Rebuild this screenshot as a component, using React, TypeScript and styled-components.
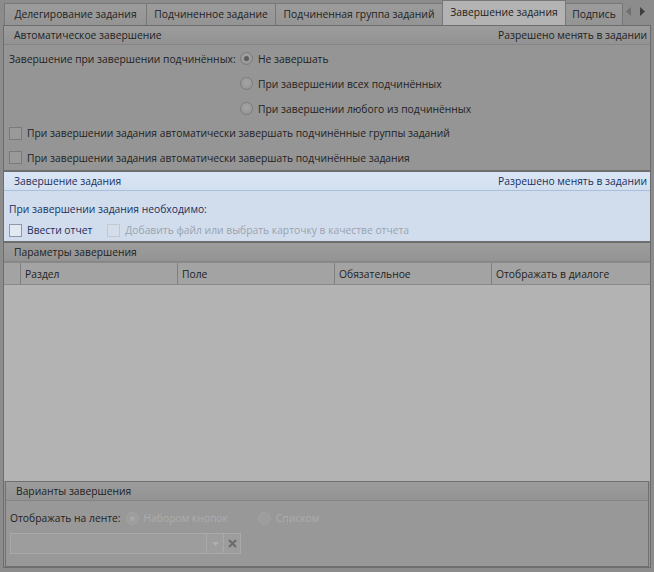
import React from "react";
import styled, { createGlobalStyle } from "styled-components";

const Global = createGlobalStyle`
  html, body { margin: 0; padding: 0; }
  body { width: 654px; height: 572px; overflow: hidden; background: #8c8c8c;
    font-family: "Open Sans", "Noto Sans", sans-serif; font-size: 10.3px; color: #222; }
  * { box-sizing: border-box; }
`;

const Page = styled.div`
  width: 654px; height: 572px; display: flex; flex-direction: column;
  background: #8c8c8c; padding: 0 3px 4px 3px;
`;

const TabStrip = styled.div`
  height: 25px; display: flex; align-items: flex-end; padding-left: 1px; position: relative;
`;

const Tab = styled.div<{ $active?: boolean; $w: number }>`
  width: ${p => p.$w}px; height: ${p => (p.$active ? 25 : 22)}px;
  display: flex; align-items: center; justify-content: center;
  border: 1px solid #777; border-bottom: none;
  background: ${p => (p.$active ? "#b3b3b3" : "linear-gradient(#9c9c9c, #949494)")};
  color: #222; white-space: nowrap; overflow: hidden; margin-right: -1px;
  padding-bottom: 2px;
`;

const Arrows = styled.div`
  position: absolute; right: 6px; top: 7px; display: flex; gap: 9px;
`;

const Frame = styled.div`
  flex: 1; border: 1px solid #6c6c6c; background: #959595;
  display: flex; flex-direction: column;
`;

const GroupHeader = styled.div<{ $blue?: boolean }>`
  height: 19px; display: flex; align-items: center; justify-content: space-between;
  padding: 0 3px 0 10px; flex-shrink: 0;
  background: ${p => (p.$blue ? "linear-gradient(#dae6f5, #d2dfef)" : "linear-gradient(#9c9c9c, #939393)")};
  border-bottom: 1px solid ${p => (p.$blue ? "#a9bfdc" : "#858585")};
  color: ${p => (p.$blue ? "#1b2f5e" : "#222")};
`;

const Section = styled.div`
  display: flex; flex-direction: column;
`;

const Body1 = styled.div`
  padding: 1px 5px 0 5px; display: flex; flex-direction: column; height: 127px;
  border-bottom: 2px solid #6e6e6e;
`;

const RadioGrid = styled.div`
  display: grid; grid-template-columns: 231px auto; align-items: center; white-space: nowrap;
`;

const Line = styled.div<{ $h: number }>`
  height: ${p => p.$h}px; display: flex; align-items: center; gap: 5px; white-space: nowrap;
`;

const RadioCircle = styled.span<{ $checked?: boolean; $disabled?: boolean }>`
  width: 13px; height: 13px; border-radius: 50%; flex-shrink: 0; position: relative;
  border: 1px solid ${p => (p.$disabled ? "#a3a3a3" : "#7c7c7c")};
  background: ${p => (p.$disabled ? "#9d9d9d" : "radial-gradient(circle at 50% 40%, #a4a4a4, #929292)")};
  &::after {
    content: ""; display: ${p => (p.$checked ? "block" : "none")};
    position: absolute; left: 3px; top: 3px; width: 5px; height: 5px; border-radius: 50%;
    background: ${p => (p.$disabled ? "#a8a8a8" : "#5d5d5d")};
  }
`;

const CheckBox = styled.span<{ $blue?: boolean; $disabled?: boolean }>`
  width: 13px; height: 13px; flex-shrink: 0;
  border: 1px solid ${p => (p.$disabled ? "#c0c8d4" : p.$blue ? "#8d99ab" : "#7a7a7a")};
  background: ${p => (p.$disabled ? "#d4dde9" : p.$blue ? "#e2e9f2" : "#9a9a9a")};
`;

const BlueSection = styled.div`
  background: #d1ddec; display: flex; flex-direction: column; color: #1b2f5e;
  border-bottom: 2px solid #6e6e6e;
`;

const BlueBody = styled.div`
  height: 50px; padding: 11px 5px 0 5px; display: flex; flex-direction: column; gap: 4px;
`;

const Muted = styled.span`
  color: #9aa3ae;
`;

const Spacer = styled.span<{ $w: number }>`
  width: ${p => p.$w}px; flex-shrink: 0;
`;

const GridHead = styled.div`
  display: grid; grid-template-columns: 16px 157px 157px 157px 1fr; height: 23px;
  background: #a3a3a3; border-bottom: 1px solid #8a8a8a; border-top: 1px solid #8a8a8a;
`;

const HeadCell = styled.div`
  display: flex; align-items: center; padding-left: 4px; border-left: 1px solid #7f7f7f;
  &:first-child { border-left: none; }
`;

const GridBody = styled.div`
  flex: 1; background: #b3b3b3;
`;

const Frame3 = styled.div`
  flex: 1; display: flex; flex-direction: column;
`;

const Variants = styled.div`
  margin: 0 1px 0 1px; border: 1px solid #707070; background: #989898;
  display: flex; flex-direction: column; height: 86px;
`;

const VariantsBody = styled.div`
  padding: 7px 4px; display: flex; flex-direction: column; gap: 5px; color: #222;
`;

const DisabledText = styled.span`
  color: #adadad;
`;

const Combo = styled.div`
  width: 231px; height: 21px; display: flex; border: 1px solid #a9a9a9; background: #9d9d9d;
`;

const ComboInput = styled.div`
  flex: 1;
`;

const ComboBtn = styled.div`
  width: 17px; display: flex; align-items: center; justify-content: center;
  border-left: 1px solid #a9a9a9;
`;

export default function App() {
  return (
    <>
      <Global />
      <Page>
        <TabStrip>
          <Tab $w={143}>Делегирование задания</Tab>
          <Tab $w={130}>Подчиненное задание</Tab>
          <Tab $w={168}>Подчиненная группа заданий</Tab>
          <Tab $w={124} $active>Завершение задания</Tab>
          <Tab $w={58}>Подпись</Tab>
          <Arrows>
            <svg width="5" height="9" viewBox="0 0 5 9"><path d="M5 0 L0 4.5 L5 9Z" fill="#6e6e6e" /></svg>
            <svg width="5" height="9" viewBox="0 0 5 9"><path d="M0 0 L5 4.5 L0 9Z" fill="#3e3e3e" /></svg>
          </Arrows>
        </TabStrip>
        <Frame>
          <Section>
            <GroupHeader>
              <span>Автоматическое завершение</span>
              <span>Разрешено менять в задании</span>
            </GroupHeader>
            <Body1>
              <RadioGrid>
                <span>Завершение при завершении подчинённых:</span>
                <Line $h={25}><RadioCircle $checked />Не завершать</Line>
                <span />
                <Line $h={25}><RadioCircle />При завершении всех подчинённых</Line>
                <span />
                <Line $h={25}><RadioCircle />При завершении любого из подчинённых</Line>
              </RadioGrid>
              <Line $h={24}><CheckBox />При завершении задания автоматически завершать подчинённые группы заданий</Line>
              <Line $h={25}><CheckBox />При завершении задания автоматически завершать подчинённые задания</Line>
            </Body1>
          </Section>
          <BlueSection>
            <GroupHeader $blue>
              <span>Завершение задания</span>
              <span>Разрешено менять в задании</span>
            </GroupHeader>
            <BlueBody>
              <span>При завершении задания необходимо:</span>
              <Line $h={20}>
                <CheckBox $blue />Ввести отчет
                <Spacer $w={5} />
                <CheckBox $disabled /><Muted>Добавить файл или выбрать карточку в качестве отчета</Muted>
              </Line>
            </BlueBody>
          </BlueSection>
          <Frame3>
            <GroupHeader>
              <span>Параметры завершения</span>
            </GroupHeader>
            <GridHead>
              <HeadCell />
              <HeadCell>Раздел</HeadCell>
              <HeadCell>Поле</HeadCell>
              <HeadCell>Обязательное</HeadCell>
              <HeadCell>Отображать в диалоге</HeadCell>
            </GridHead>
            <GridBody />
            <Variants>
              <GroupHeader>
                <span>Варианты завершения</span>
              </GroupHeader>
              <VariantsBody>
                <Line $h={20}>
                  Отображать на ленте:
                  <RadioCircle $checked $disabled /><DisabledText>Набором кнопок</DisabledText>
                  <Spacer $w={20} />
                  <RadioCircle $disabled /><DisabledText>Списком</DisabledText>
                </Line>
                <Combo>
                  <ComboInput />
                  <ComboBtn>
                    <svg width="7" height="4" viewBox="0 0 7 4"><path d="M0 0 H7 L3.5 4Z" fill="#b0b0b0" /></svg>
                  </ComboBtn>
                  <ComboBtn>
                    <svg width="9" height="9" viewBox="0 0 9 9"><path d="M1 1 L8 8 M8 1 L1 8" stroke="#6a6a6a" strokeWidth="2" /></svg>
                  </ComboBtn>
                </Combo>
              </VariantsBody>
            </Variants>
          </Frame3>
        </Frame>
      </Page>
    </>
  );
}
